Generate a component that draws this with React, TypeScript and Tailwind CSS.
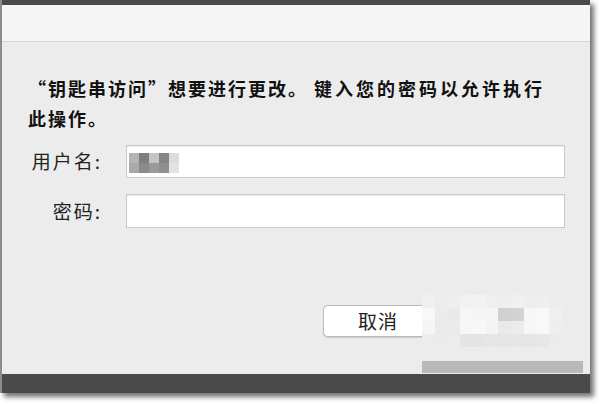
const font = { fontFamily: '"Noto Sans CJK SC", "Noto Sans", sans-serif' }

const nameCells = [
    'bg-[#b4b4b4]', 'bg-[#7e7e7e]', 'bg-[#c4c4c4]', 'bg-[#858585]', 'bg-[#dcdcdc]',
    'bg-[#a9a9a9]', 'bg-[#8a8a8a]', 'bg-[#9a9a9a]', 'bg-[#8f8f8f]', 'bg-[#e2e2e2]',
]

const okCells = [
    'bg-[#f0f0f0]', 'bg-[#ececec]', 'bg-[#eeeeee]', 'bg-[#f1f1f1]', 'bg-[#f2f2f2]', 'bg-[#efefef]', 'bg-[#eeeeee]', 'bg-[#f0f0f0]', 'bg-[#eeeeee]', 'bg-[#efefef]', 'bg-[#ededed]',
    'bg-[#f8f8f8]', 'bg-[#ebebeb]', 'bg-[#e9e9e9]', 'bg-[#f6f6f6]', 'bg-[#f4f4f4]', 'bg-[#f5f5f5]', 'bg-[#d0d0d0]', 'bg-[#d3d3d3]', 'bg-[#f6f6f6]', 'bg-[#f9f9f9]', 'bg-[#efefef]',
    'bg-[#f5f5f5]', 'bg-[#eaeaea]', 'bg-[#ebebeb]', 'bg-[#f7f7f7]', 'bg-[#f8f8f8]', 'bg-[#f4f4f4]', 'bg-[#e9e9e9]', 'bg-[#ebebeb]', 'bg-[#f6f6f6]', 'bg-[#f8f8f8]', 'bg-[#eeeeee]',
    'bg-[#ececec]', 'bg-[#ebebeb]', 'bg-[#ececec]', 'bg-[#e4e4e4]', 'bg-[#e4e4e4]', 'bg-[#e6e6e6]', 'bg-[#e5e5e5]', 'bg-[#e6e6e6]', 'bg-[#e5e5e5]', 'bg-[#e7e7e7]', 'bg-[#ebebeb]',
]

export default function App() {
    return (
        <div className="w-[600px] h-[404px] bg-white overflow-hidden" style={font}>
            <div className="w-[590px] h-[393px] flex flex-col border-l-2 border-[#8c8c8c] shadow-[4px_4px_5px_rgba(0,0,0,0.55)]">
                <div className="h-[5px] bg-[#4a4a4a]"></div>
                <div className="h-[37px] bg-[#f5f5f5] border-b border-[#d4d4d4]"></div>
                <div className="flex-1 bg-[#ececec] flex flex-col pt-[31px]">
                    <p className="pl-[26px] text-[18px] leading-[30px] font-bold text-[#111] whitespace-nowrap">
                        <span className="tracking-[2px]">“钥匙串访问”想要进行更改。 </span>
                        <span className="tracking-[3px]">键入您的密码以允许执行</span>
                        <br />
                        <span className="tracking-[2px]">此操作。</span>
                    </p>
                    <div className="mt-[12px] flex flex-col gap-[16px]">
                        <div className="flex items-center">
                            <span className="w-[100px] text-right text-[19px] text-[#222] tracking-[2px]">用户名:</span>
                            <div className="ml-[24px] w-[439px] h-[33px] bg-white border border-[#c9c9c9] shadow-[inset_0_1px_1px_rgba(0,0,0,0.08)] pl-[2px] pt-[7px]">
                                <div className="grid grid-cols-5 w-[50px]">
                                    {nameCells.map((c, i) => (
                                        <div key={i} className={`h-[10px] ${c}`}></div>
                                    ))}
                                </div>
                            </div>
                        </div>
                        <div className="flex items-center">
                            <span className="w-[100px] text-right text-[19px] text-[#222] tracking-[2px]">密码:</span>
                            <div className="ml-[24px] w-[439px] h-[34px] bg-white border border-[#c9c9c9] shadow-[inset_0_1px_1px_rgba(0,0,0,0.08)]"></div>
                        </div>
                    </div>
                    <div className="mt-[67px] flex justify-end items-center pr-[28px]">
                        <button className="w-[99px] h-[32px] bg-white border border-r-0 border-[#bcbcbc] rounded-l-[5px] shadow-[0_1px_1px_rgba(0,0,0,0.15)] text-[19px] text-[#222] pl-[10px] tracking-[1px]">
                            取消
                        </button>
                        <div className="grid grid-cols-11 w-[140px]">
                            {okCells.map((c, i) => (
                                <div key={i} className={`h-[13px] ${c}`}></div>
                            ))}
                        </div>
                    </div>
                    <div className="mt-[14px] flex justify-end pr-[7px]">
                        <div className="w-[161px] h-[12px] bg-[#b9b9b9]"></div>
                    </div>
                </div>
                <div className="h-[19px] bg-[#4a4a4a]"></div>
            </div>
        </div>
    )
}
